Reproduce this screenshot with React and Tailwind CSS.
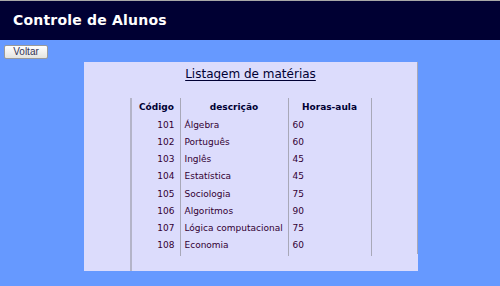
import React from 'react';

const materias = [
    { codigo: 101, descricao: 'Álgebra', horas: 60 },
    { codigo: 102, descricao: 'Português', horas: 60 },
    { codigo: 103, descricao: 'Inglês', horas: 45 },
    { codigo: 104, descricao: 'Estatística', horas: 45 },
    { codigo: 105, descricao: 'Sociologia', horas: 75 },
    { codigo: 106, descricao: 'Algoritmos', horas: 90 },
    { codigo: 107, descricao: 'Lógica computacional', horas: 75 },
    { codigo: 108, descricao: 'Economia', horas: 60 },
];

const App = () => {
    return (
        <div className="w-[500px] h-[286px] bg-[#6699ff] border-t border-[#a8a8a8] font-['DejaVu_Sans',Verdana,sans-serif] overflow-hidden">
            <header className="h-[39px] bg-[#000033] flex items-center pl-[13px]">
                <h1 className="text-white font-bold text-[14px] tracking-[0.2px]">Controle de Alunos</h1>
            </header>
            <div className="pl-[4px] pt-[5px]">
                <button className="w-[44px] h-[14px] text-[10px] leading-none text-[#333355] font-['Liberation_Sans',Arial,sans-serif] bg-gradient-to-b from-white to-[#e4e4e0] border border-[#9a9a9a] rounded-[2px] flex items-center justify-center">
                    Voltar
                </button>
            </div>
            <main className="ml-[84px] mt-[3px] w-[334px] h-[209px] bg-[#dcdcfc] flex">
                <div className="flex-1 flex flex-col items-center">
                    <h2 className="mt-[3px] text-[12px] text-[#000033] underline underline-offset-[2px] decoration-1">Listagem de matérias</h2>
                    <div className="mt-[15px] ml-[1px] w-[243px] flex-1 border-l-2 border-[#b4b4c8] flex items-start text-[9px] text-[#330033]">
                        <div className="w-[49px] border-r border-[#a8a8b8] pb-[1px]">
                            <div className="h-[19px] flex items-center justify-center font-bold text-[#000033] pl-[2px]">Código</div>
                            {materias.map((m) => (
                                <div key={m.codigo} className="h-[17.2px] flex items-center justify-end pr-[5px]">{m.codigo}</div>
                            ))}
                        </div>
                        <div className="w-[108px] border-r border-[#a8a8b8] pb-[1px]">
                            <div className="h-[19px] flex items-center justify-center font-bold text-[#000033]">descrição</div>
                            {materias.map((m) => (
                                <div key={m.codigo} className="h-[17.2px] flex items-center pl-[4px] whitespace-nowrap">{m.descricao}</div>
                            ))}
                        </div>
                        <div className="w-[83px] border-r border-[#a8a8b8] pb-[1px]">
                            <div className="h-[19px] flex items-center justify-center font-bold text-[#000033]">Horas-aula</div>
                            {materias.map((m) => (
                                <div key={m.codigo} className="h-[17.2px] flex items-center pl-[4px]">{m.horas}</div>
                            ))}
                        </div>
                    </div>
                </div>
                <div className="w-[1px] h-[192px] bg-[#a8a8b8]" />
            </main>
        </div>
    );
};

export default App;
